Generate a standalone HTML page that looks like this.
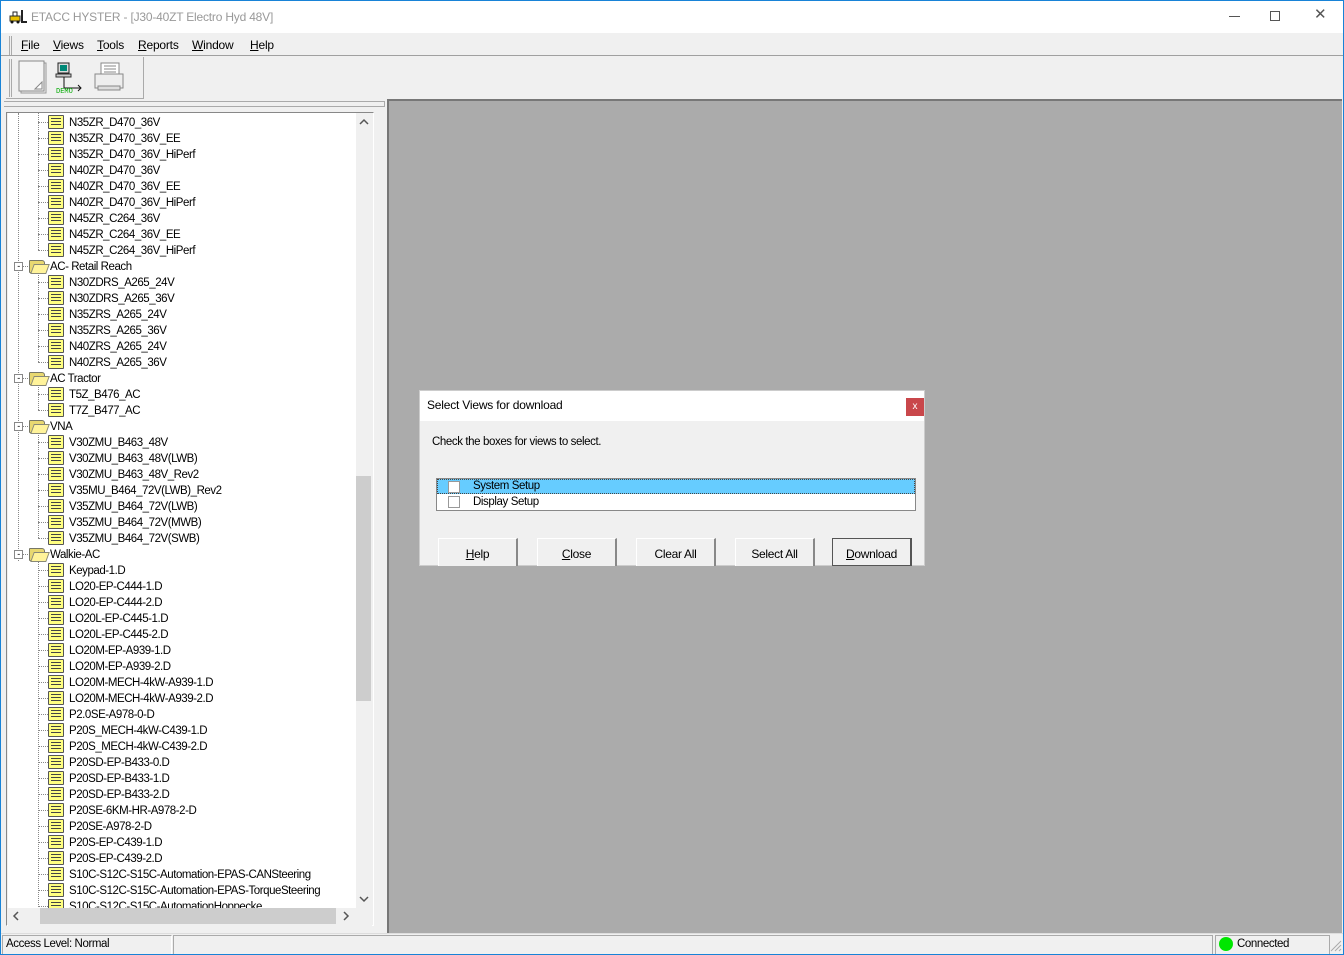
<!DOCTYPE html>
<html><head><meta charset="utf-8">
<style>
*{margin:0;padding:0;box-sizing:border-box}
body{width:1344px;height:955px;overflow:hidden;background:#f0f0f0;font-family:"Liberation Sans",Arial,sans-serif;font-size:12px;color:#000;position:relative}
.abs{position:absolute}
#frame{left:0;top:0;width:1344px;height:955px;border:1px solid #1883d7}
#title{left:1px;top:1px;width:1342px;height:32px;background:#fff}
#title .t{left:30px;top:9px;color:#999;font-size:12px;letter-spacing:-0.2px}
.menu{top:38px;font-size:12px;letter-spacing:-0.2px}
.tree{left:8px;top:113px;width:348px;height:795px;background:#fff;overflow:hidden}
.row{position:absolute;height:16px;line-height:16px;white-space:nowrap;font-size:11.5px;letter-spacing:-0.45px;padding-top:1px}
.row>span:last-child{top:1px}
.leaf{position:absolute;width:16px;height:14px;top:1px;background:#ffff80;border:1px solid #555;border-radius:1px}
.leaf:after{content:"";position:absolute;left:2px;top:2px;width:10px;height:9px;background:repeating-linear-gradient(#444 0 1px,transparent 1px 3px)}
.fold{position:absolute;width:16px;height:13px;top:2px;background:#e8d870;border:1px solid #776;border-radius:1px 3px 1px 1px}
.fold:after{content:"";position:absolute;left:2px;top:3px;width:14px;height:8px;background:#fff39a;border:1px solid #887;transform:skewX(-20deg)}
.hd{position:absolute;border-top:1px dotted #888;width:10px;top:8px}
.box{position:absolute;width:9px;height:9px;border:1px solid #888;background:#fff;top:4px;font-size:9px;line-height:6px;text-align:center}
.btn{position:absolute;top:538px;width:80px;height:28px;background:#f0f0f0;border-left:1px solid #fff;border-top:1px solid #fff;border-right:2px solid #888;text-align:center;line-height:30px;font-size:12px;letter-spacing:-0.3px}
</style></head><body>
<div class="abs" id="frame"></div>
<div class="abs" id="title">
 <svg class="abs" style="left:8px;top:9px" width="18" height="14"><rect x="1" y="6" width="10" height="5" fill="#e8c000" stroke="#333"/><rect x="4" y="2" width="4" height="4" fill="none" stroke="#222"/><rect x="12" y="0" width="2" height="12" fill="#222"/><rect x="12" y="11" width="6" height="2" fill="#222"/><circle cx="3" cy="12" r="1.5" fill="#111"/><circle cx="9" cy="12" r="1.5" fill="#111"/></svg>
 <div class="abs t">ETACC HYSTER - [J30-40ZT Electro Hyd 48V]</div>
 <div class="abs" style="left:1228px;top:15px;width:11px;border-top:1px solid #555"></div>
 <div class="abs" style="left:1269px;top:10px;width:10px;height:10px;border:1px solid #555"></div>
 <div class="abs" style="left:1313px;top:4px;font-size:15px;color:#555">✕</div>
</div>
<div class="abs" style="left:1px;top:33px;width:1342px;height:23px;background:#f0f0f0;border-bottom:1px solid #a0a0a0"></div>
<div class="abs" style="left:9px;top:36px;width:3px;height:19px;border-left:1px solid #aaa;border-right:1px solid #aaa"></div>
<div class="abs menu" style="left:21px"><u>F</u>ile</div>
<div class="abs menu" style="left:53px"><u>V</u>iews</div>
<div class="abs menu" style="left:97px"><u>T</u>ools</div>
<div class="abs menu" style="left:138px"><u>R</u>eports</div>
<div class="abs menu" style="left:192px"><u>W</u>indow</div>
<div class="abs menu" style="left:250px"><u>H</u>elp</div>
<div class="abs" style="left:6px;top:57px;width:138px;height:42px;border-right:1px solid #aaa;border-bottom:1px solid #aaa"></div>
<div class="abs" style="left:9px;top:59px;width:3px;height:38px;border-left:1px solid #aaa;border-right:1px solid #aaa"></div>
<svg class="abs" style="left:18px;top:60px" width="30" height="34"><rect x="3" y="3" width="25" height="30" fill="#eee" stroke="#999"/><rect x="1" y="1" width="25" height="30" fill="#f4f4f4" stroke="#888"/><path d="M17 29 L24 22 L24 29 Z" fill="#fff" stroke="#888"/></svg>
<svg class="abs" style="left:55px;top:62px" width="30" height="32"><rect x="3" y="1" width="11" height="10" fill="#ddd" stroke="#222"/><rect x="5" y="3" width="7" height="6" fill="#087"/><rect x="1" y="12" width="15" height="3" fill="#ccc" stroke="#333"/><path d="M9 15 V26 H26 M23 23 L26 26 L23 29" fill="none" stroke="#111"/><text x="1" y="31" font-size="7" fill="#0a0" font-family="Liberation Mono">DEMO</text></svg>
<svg class="abs" style="left:93px;top:62px" width="32" height="30"><rect x="8" y="1" width="18" height="12" fill="#fff" stroke="#888"/><path d="M11 4h12M11 7h12M11 10h12" stroke="#888"/><rect x="2" y="12" width="28" height="14" fill="#eee" stroke="#888"/><rect x="5" y="24" width="22" height="4" fill="#ddd" stroke="#888"/></svg>
<div class="abs" style="left:4px;top:101px;width:381px;height:6px;border:1px solid #aaa;border-left:none"></div>
<div class="abs" style="left:6px;top:112px;width:368px;height:814px;border:1px solid #888;border-right-color:#fff;border-bottom-color:#fff"></div>
<div class="abs tree">
 <div class="abs" style="left:10px;top:0;height:448px;border-left:1px dotted #888"></div>
 <div class="abs" style="left:30px;top:0;height:137px;border-left:1px dotted #888"></div>
 <div class="abs" style="left:30px;top:160px;height:89px;border-left:1px dotted #888"></div>
 <div class="abs" style="left:30px;top:272px;height:25px;border-left:1px dotted #888"></div>
 <div class="abs" style="left:30px;top:320px;height:105px;border-left:1px dotted #888"></div>
 <div class="abs" style="left:30px;top:448px;height:360px;border-left:1px dotted #888"></div>
</div>
<div class="abs" style="left:8px;top:114px;width:348px;height:794px;overflow:hidden">
<div class="row" style="top:0"><span class="hd" style="left:30px"></span><span class="leaf" style="left:40px"></span><span style="position:absolute;left:61px">N35ZR_D470_36V</span></div>
<div class="row" style="top:16px"><span class="hd" style="left:30px"></span><span class="leaf" style="left:40px"></span><span style="position:absolute;left:61px">N35ZR_D470_36V_EE</span></div>
<div class="row" style="top:32px"><span class="hd" style="left:30px"></span><span class="leaf" style="left:40px"></span><span style="position:absolute;left:61px">N35ZR_D470_36V_HiPerf</span></div>
<div class="row" style="top:48px"><span class="hd" style="left:30px"></span><span class="leaf" style="left:40px"></span><span style="position:absolute;left:61px">N40ZR_D470_36V</span></div>
<div class="row" style="top:64px"><span class="hd" style="left:30px"></span><span class="leaf" style="left:40px"></span><span style="position:absolute;left:61px">N40ZR_D470_36V_EE</span></div>
<div class="row" style="top:80px"><span class="hd" style="left:30px"></span><span class="leaf" style="left:40px"></span><span style="position:absolute;left:61px">N40ZR_D470_36V_HiPerf</span></div>
<div class="row" style="top:96px"><span class="hd" style="left:30px"></span><span class="leaf" style="left:40px"></span><span style="position:absolute;left:61px">N45ZR_C264_36V</span></div>
<div class="row" style="top:112px"><span class="hd" style="left:30px"></span><span class="leaf" style="left:40px"></span><span style="position:absolute;left:61px">N45ZR_C264_36V_EE</span></div>
<div class="row" style="top:128px"><span class="hd" style="left:30px"></span><span class="leaf" style="left:40px"></span><span style="position:absolute;left:61px">N45ZR_C264_36V_HiPerf</span></div>
<div class="row" style="top:144px"><span class="hd" style="left:10px"></span><span class="box" style="left:6px">-</span><span class="fold" style="left:21px"></span><span style="position:absolute;left:42px">AC- Retail Reach</span></div>
<div class="row" style="top:160px"><span class="hd" style="left:30px"></span><span class="leaf" style="left:40px"></span><span style="position:absolute;left:61px">N30ZDRS_A265_24V</span></div>
<div class="row" style="top:176px"><span class="hd" style="left:30px"></span><span class="leaf" style="left:40px"></span><span style="position:absolute;left:61px">N30ZDRS_A265_36V</span></div>
<div class="row" style="top:192px"><span class="hd" style="left:30px"></span><span class="leaf" style="left:40px"></span><span style="position:absolute;left:61px">N35ZRS_A265_24V</span></div>
<div class="row" style="top:208px"><span class="hd" style="left:30px"></span><span class="leaf" style="left:40px"></span><span style="position:absolute;left:61px">N35ZRS_A265_36V</span></div>
<div class="row" style="top:224px"><span class="hd" style="left:30px"></span><span class="leaf" style="left:40px"></span><span style="position:absolute;left:61px">N40ZRS_A265_24V</span></div>
<div class="row" style="top:240px"><span class="hd" style="left:30px"></span><span class="leaf" style="left:40px"></span><span style="position:absolute;left:61px">N40ZRS_A265_36V</span></div>
<div class="row" style="top:256px"><span class="hd" style="left:10px"></span><span class="box" style="left:6px">-</span><span class="fold" style="left:21px"></span><span style="position:absolute;left:42px">AC Tractor</span></div>
<div class="row" style="top:272px"><span class="hd" style="left:30px"></span><span class="leaf" style="left:40px"></span><span style="position:absolute;left:61px">T5Z_B476_AC</span></div>
<div class="row" style="top:288px"><span class="hd" style="left:30px"></span><span class="leaf" style="left:40px"></span><span style="position:absolute;left:61px">T7Z_B477_AC</span></div>
<div class="row" style="top:304px"><span class="hd" style="left:10px"></span><span class="box" style="left:6px">-</span><span class="fold" style="left:21px"></span><span style="position:absolute;left:42px">VNA</span></div>
<div class="row" style="top:320px"><span class="hd" style="left:30px"></span><span class="leaf" style="left:40px"></span><span style="position:absolute;left:61px">V30ZMU_B463_48V</span></div>
<div class="row" style="top:336px"><span class="hd" style="left:30px"></span><span class="leaf" style="left:40px"></span><span style="position:absolute;left:61px">V30ZMU_B463_48V(LWB)</span></div>
<div class="row" style="top:352px"><span class="hd" style="left:30px"></span><span class="leaf" style="left:40px"></span><span style="position:absolute;left:61px">V30ZMU_B463_48V_Rev2</span></div>
<div class="row" style="top:368px"><span class="hd" style="left:30px"></span><span class="leaf" style="left:40px"></span><span style="position:absolute;left:61px">V35MU_B464_72V(LWB)_Rev2</span></div>
<div class="row" style="top:384px"><span class="hd" style="left:30px"></span><span class="leaf" style="left:40px"></span><span style="position:absolute;left:61px">V35ZMU_B464_72V(LWB)</span></div>
<div class="row" style="top:400px"><span class="hd" style="left:30px"></span><span class="leaf" style="left:40px"></span><span style="position:absolute;left:61px">V35ZMU_B464_72V(MWB)</span></div>
<div class="row" style="top:416px"><span class="hd" style="left:30px"></span><span class="leaf" style="left:40px"></span><span style="position:absolute;left:61px">V35ZMU_B464_72V(SWB)</span></div>
<div class="row" style="top:432px"><span class="hd" style="left:10px"></span><span class="box" style="left:6px">-</span><span class="fold" style="left:21px"></span><span style="position:absolute;left:42px">Walkie-AC</span></div>
<div class="row" style="top:448px"><span class="hd" style="left:30px"></span><span class="leaf" style="left:40px"></span><span style="position:absolute;left:61px">Keypad-1.D</span></div>
<div class="row" style="top:464px"><span class="hd" style="left:30px"></span><span class="leaf" style="left:40px"></span><span style="position:absolute;left:61px">LO20-EP-C444-1.D</span></div>
<div class="row" style="top:480px"><span class="hd" style="left:30px"></span><span class="leaf" style="left:40px"></span><span style="position:absolute;left:61px">LO20-EP-C444-2.D</span></div>
<div class="row" style="top:496px"><span class="hd" style="left:30px"></span><span class="leaf" style="left:40px"></span><span style="position:absolute;left:61px">LO20L-EP-C445-1.D</span></div>
<div class="row" style="top:512px"><span class="hd" style="left:30px"></span><span class="leaf" style="left:40px"></span><span style="position:absolute;left:61px">LO20L-EP-C445-2.D</span></div>
<div class="row" style="top:528px"><span class="hd" style="left:30px"></span><span class="leaf" style="left:40px"></span><span style="position:absolute;left:61px">LO20M-EP-A939-1.D</span></div>
<div class="row" style="top:544px"><span class="hd" style="left:30px"></span><span class="leaf" style="left:40px"></span><span style="position:absolute;left:61px">LO20M-EP-A939-2.D</span></div>
<div class="row" style="top:560px"><span class="hd" style="left:30px"></span><span class="leaf" style="left:40px"></span><span style="position:absolute;left:61px">LO20M-MECH-4kW-A939-1.D</span></div>
<div class="row" style="top:576px"><span class="hd" style="left:30px"></span><span class="leaf" style="left:40px"></span><span style="position:absolute;left:61px">LO20M-MECH-4kW-A939-2.D</span></div>
<div class="row" style="top:592px"><span class="hd" style="left:30px"></span><span class="leaf" style="left:40px"></span><span style="position:absolute;left:61px">P2.0SE-A978-0-D</span></div>
<div class="row" style="top:608px"><span class="hd" style="left:30px"></span><span class="leaf" style="left:40px"></span><span style="position:absolute;left:61px">P20S_MECH-4kW-C439-1.D</span></div>
<div class="row" style="top:624px"><span class="hd" style="left:30px"></span><span class="leaf" style="left:40px"></span><span style="position:absolute;left:61px">P20S_MECH-4kW-C439-2.D</span></div>
<div class="row" style="top:640px"><span class="hd" style="left:30px"></span><span class="leaf" style="left:40px"></span><span style="position:absolute;left:61px">P20SD-EP-B433-0.D</span></div>
<div class="row" style="top:656px"><span class="hd" style="left:30px"></span><span class="leaf" style="left:40px"></span><span style="position:absolute;left:61px">P20SD-EP-B433-1.D</span></div>
<div class="row" style="top:672px"><span class="hd" style="left:30px"></span><span class="leaf" style="left:40px"></span><span style="position:absolute;left:61px">P20SD-EP-B433-2.D</span></div>
<div class="row" style="top:688px"><span class="hd" style="left:30px"></span><span class="leaf" style="left:40px"></span><span style="position:absolute;left:61px">P20SE-6KM-HR-A978-2-D</span></div>
<div class="row" style="top:704px"><span class="hd" style="left:30px"></span><span class="leaf" style="left:40px"></span><span style="position:absolute;left:61px">P20SE-A978-2-D</span></div>
<div class="row" style="top:720px"><span class="hd" style="left:30px"></span><span class="leaf" style="left:40px"></span><span style="position:absolute;left:61px">P20S-EP-C439-1.D</span></div>
<div class="row" style="top:736px"><span class="hd" style="left:30px"></span><span class="leaf" style="left:40px"></span><span style="position:absolute;left:61px">P20S-EP-C439-2.D</span></div>
<div class="row" style="top:752px"><span class="hd" style="left:30px"></span><span class="leaf" style="left:40px"></span><span style="position:absolute;left:61px">S10C-S12C-S15C-Automation-EPAS-CANSteering</span></div>
<div class="row" style="top:768px"><span class="hd" style="left:30px"></span><span class="leaf" style="left:40px"></span><span style="position:absolute;left:61px">S10C-S12C-S15C-Automation-EPAS-TorqueSteering</span></div>
<div class="row" style="top:784px"><span class="hd" style="left:30px"></span><span class="leaf" style="left:40px"></span><span style="position:absolute;left:61px">S10C-S12C-S15C-AutomationHoppecke</span></div>
</div>
<div class="abs" style="left:356px;top:113px;width:16px;height:795px;background:#f0f0f0"></div>
<div class="abs" style="left:356px;top:476px;width:15px;height:225px;background:#cdcdcd"></div>
<svg class="abs" style="left:359px;top:118px" width="10" height="8"><path d="M1 6L5 2L9 6" fill="none" stroke="#555" stroke-width="1.5"/></svg>
<svg class="abs" style="left:359px;top:895px" width="10" height="8"><path d="M1 2L5 6L9 2" fill="none" stroke="#555" stroke-width="1.5"/></svg>
<div class="abs" style="left:8px;top:908px;width:364px;height:16px;background:#f0f0f0"></div>
<div class="abs" style="left:40px;top:908px;width:296px;height:16px;background:#cdcdcd"></div>
<svg class="abs" style="left:12px;top:911px" width="8" height="10"><path d="M6 1L2 5L6 9" fill="none" stroke="#555" stroke-width="1.5"/></svg>
<svg class="abs" style="left:342px;top:911px" width="8" height="10"><path d="M2 1L6 5L2 9" fill="none" stroke="#555" stroke-width="1.5"/></svg>
<div class="abs" style="left:8px;top:924px;width:364px;height:2px;background:#f0f0f0"></div>
<div class="abs" style="left:387px;top:99px;width:955px;height:834px;background:#ababab;border-left:2px solid #777;border-top:2px solid #777"></div>
<div class="abs" style="left:419px;top:390px;width:506px;height:176px;background:#f0f0f0;border:1px solid #ccc">
 <div class="abs" style="left:0;top:0;width:504px;height:30px;background:#fff"></div>
 <div class="abs" style="left:7px;top:7px;font-size:12px;letter-spacing:-0.2px">Select Views for download</div>
 <div class="abs" style="left:486px;top:7px;width:18px;height:18px;background:#c9474b;color:#fff;font-size:10px;text-align:center;line-height:17px">x</div>
 <div class="abs" style="left:12px;top:45px;font-size:11.5px;letter-spacing:-0.4px">Check the boxes for views to select.</div>
 <div class="abs" style="left:16px;top:87px;width:480px;height:33px;background:#fff;border:1px solid #888">
  <div class="abs" style="left:0;top:0;width:478px;height:15px;background:#66ccff;border:1px dotted #444"></div>
  <div class="abs" style="left:11px;top:2px;width:12px;height:12px;border:1px solid #999;background:#fff"></div>
  <div class="abs" style="left:11px;top:17px;width:12px;height:12px;border:1px solid #999;background:#fff"></div>
  <div class="abs" style="left:36px;top:1px;font-size:11.5px;letter-spacing:-0.4px">System Setup</div>
  <div class="abs" style="left:36px;top:17px;font-size:11.5px;letter-spacing:-0.4px">Display Setup</div>
 </div>
 <div class="btn" style="left:18px;top:147px"><u>H</u>elp</div>
 <div class="btn" style="left:117px;top:147px"><u>C</u>lose</div>
 <div class="btn" style="left:216px;top:147px">Clear All</div>
 <div class="btn" style="left:315px;top:147px">Select All</div>
 <div class="btn" style="left:412px;top:147px;border:1px solid #555;border-right:2px solid #555"><u>D</u>ownload</div>
</div>
<div class="abs" style="left:1px;top:933px;width:1342px;height:21px;background:#f0f0f0;border-top:1px solid #ddd"></div>
<div class="abs" style="left:2px;top:935px;width:170px;height:19px;border:1px solid #aaa;border-right-color:#fff;border-bottom:none"></div>
<div class="abs" style="left:6px;top:938px;font-size:11.5px;letter-spacing:-0.4px">Access Level: Normal</div>
<div class="abs" style="left:173px;top:935px;width:1040px;height:19px;border:1px solid #aaa;border-bottom:none"></div>
<div class="abs" style="left:1215px;top:935px;width:115px;height:19px;border:1px solid #aaa;border-bottom:none"></div>
<div class="abs" style="left:1219px;top:937px;width:14px;height:14px;border-radius:50%;background:#00e600"></div>
<div class="abs" style="left:1237px;top:938px;font-size:11.5px;letter-spacing:-0.4px">Connected</div>
<svg class="abs" style="left:1330px;top:940px" width="12" height="13"><path d="M11 1L1 11M11 5L5 11M11 9L9 11" stroke="#aaa"/></svg>
</body></html>
